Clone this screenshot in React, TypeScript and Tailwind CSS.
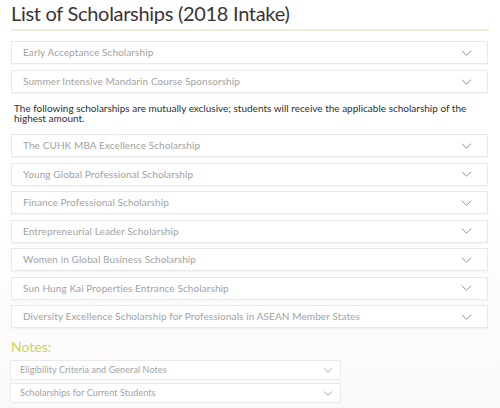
import React from 'react';

const mainItems = [
  'Early Acceptance Scholarship',
  'Summer Intensive Mandarin Course Sponsorship',
];

const exclusiveItems = [
  'The CUHK MBA Excellence Scholarship',
  'Young Global Professional Scholarship',
  'Finance Professional Scholarship',
  'Entrepreneurial Leader Scholarship',
  'Women in Global Business Scholarship',
  'Sun Hung Kai Properties Entrance Scholarship',
  'Diversity Excellence Scholarship for Professionals in ASEAN Member States',
];

const noteItems = ['Eligibility Criteria and General Notes', 'Scholarships for Current Students'];

function Chevron({ className = '' }: { className?: string }) {
  return (
    <svg viewBox="0 0 12 7" className={className} fill="none" stroke="#8a8a8a" strokeWidth="1.1">
      <path d="M0.5 0.8 L6 6 L11.5 0.8" />
    </svg>
  );
}

function AccordionRow({ label }: { label: string }) {
  return (
    <div className="flex h-[23px] items-center justify-between border border-[#e9e9e9] bg-white pl-[11px] pr-[15px] shadow-[0_1px_1px_rgba(0,0,0,0.03)]">
      <span className="text-[10px] tracking-[0.1px] text-[#a2a2a2]">{label}</span>
      <Chevron className="h-[6px] w-[11px]" />
    </div>
  );
}

function NoteRow({ label }: { label: string }) {
  return (
    <div className="flex h-[20px] items-center justify-between border border-[#ebebeb] bg-white pl-[9px] pr-[7px]">
      <span className="text-[9px] tracking-[0.1px] text-[#a2a2a2]">{label}</span>
      <Chevron className="h-[5px] w-[10px]" />
    </div>
  );
}

export default function App() {
  return (
    <div className="h-[408px] w-[500px] overflow-hidden bg-gradient-to-b from-white via-white to-[#fbf8f9] px-[11px] font-['Lato','Open_Sans',sans-serif]">
      <h1 className="border-b-2 border-[#eef0d8] pb-[3px] pt-[1px] text-[20px] leading-[25px] tracking-[-0.3px] text-[#3a3336]">
        List of Scholarships (2018 Intake)
      </h1>

      <div className="mt-[10px] flex flex-col gap-[6px] pr-[1px]">
        {mainItems.map((item) => (
          <AccordionRow key={item} label={item} />
        ))}
      </div>

      <p className="mt-[10px] pl-[3px] pr-[8px] text-[10px] leading-[10px] text-[#2f2f2f]">
        The following scholarships are mutually exclusive; students will receive the applicable scholarship of the
        highest amount.
      </p>

      <div className="mt-[11px] flex flex-col gap-[5.5px] pr-[1px]">
        {exclusiveItems.map((item) => (
          <AccordionRow key={item} label={item} />
        ))}
      </div>

      <div className="mt-[10px] text-[14px] leading-[18px] text-[#cdd45c]">Notes:</div>

      <div className="mt-[4px] flex w-[331px] flex-col gap-[3px] -ml-[1px]">
        {noteItems.map((item) => (
          <NoteRow key={item} label={item} />
        ))}
      </div>
    </div>
  );
}
